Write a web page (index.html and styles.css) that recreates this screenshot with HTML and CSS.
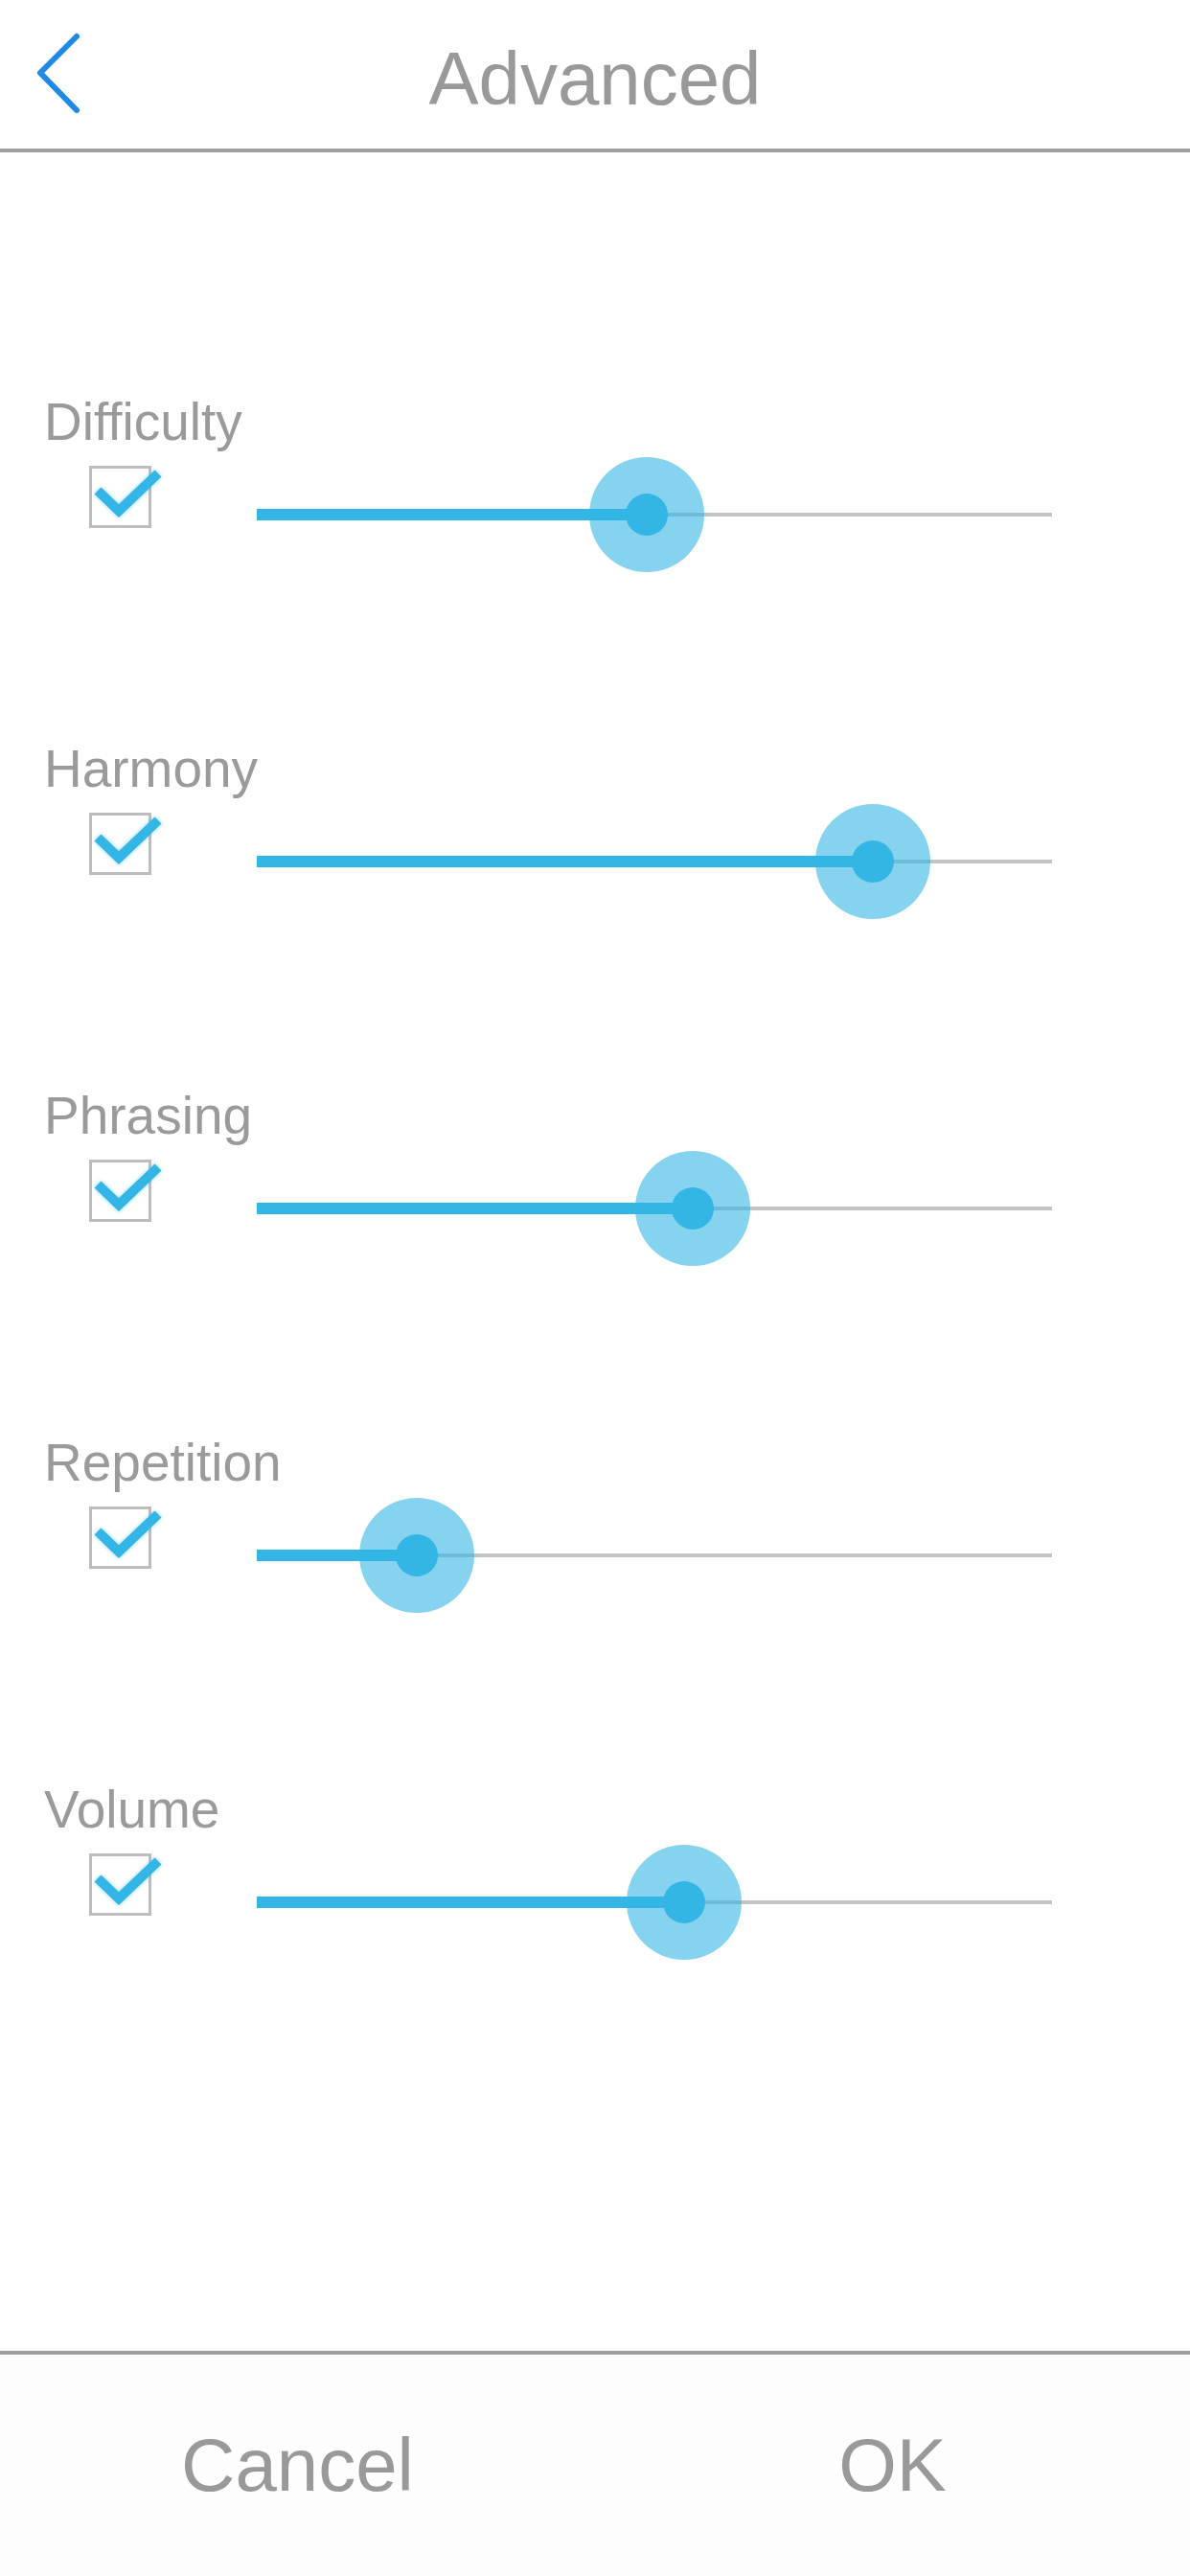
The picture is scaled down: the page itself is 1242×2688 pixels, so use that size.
FILE: index.html
```html
<!DOCTYPE html>
<html lang="en">
  <head>
    <meta charset="UTF-8" />
    <title>Advanced</title>
    <link rel="stylesheet" href="styles.css">
  </head>
  <body>
    <div class="screen">
      <div class="back-press"></div>

      <div class="header">
        <a class="back-btn" href="#">
          <svg width="60" height="100" viewBox="0 0 60 100">
            <polyline points="39,3 1,41 39,80" fill="none" stroke="#1e8ae6" stroke-width="6" stroke-linecap="round" stroke-linejoin="round" />
          </svg>
        </a>
        <div class="title">Advanced</div>
      </div>

      <div class="content">
        <div class="setting">
          <div class="setting-label">Difficulty</div>
          <div class="setting-controls">
            <div class="check">
              <svg width="65" height="65" viewBox="0 0 65 65">
                <polyline points="9,26 31,47 72,8" fill="none" stroke="#33b5e5" stroke-width="10" />
              </svg>
            </div>
            <div class="slider">
              <div class="slider-track"></div>
              <div class="slider-fill" style="width: 49%"></div>
              <div class="slider-thumb" style="left: 49%"></div>
            </div>
          </div>
        </div>

        <div class="setting">
          <div class="setting-label">Harmony</div>
          <div class="setting-controls">
            <div class="check">
              <svg width="65" height="65" viewBox="0 0 65 65">
                <polyline points="9,26 31,47 72,8" fill="none" stroke="#33b5e5" stroke-width="10" />
              </svg>
            </div>
            <div class="slider">
              <div class="slider-track"></div>
              <div class="slider-fill" style="width: 77.5%"></div>
              <div class="slider-thumb" style="left: 77.5%"></div>
            </div>
          </div>
        </div>

        <div class="setting">
          <div class="setting-label">Phrasing</div>
          <div class="setting-controls">
            <div class="check">
              <svg width="65" height="65" viewBox="0 0 65 65">
                <polyline points="9,26 31,47 72,8" fill="none" stroke="#33b5e5" stroke-width="10" />
              </svg>
            </div>
            <div class="slider">
              <div class="slider-track"></div>
              <div class="slider-fill" style="width: 54.8%"></div>
              <div class="slider-thumb" style="left: 54.8%"></div>
            </div>
          </div>
        </div>

        <div class="setting">
          <div class="setting-label">Repetition</div>
          <div class="setting-controls">
            <div class="check">
              <svg width="65" height="65" viewBox="0 0 65 65">
                <polyline points="9,26 31,47 72,8" fill="none" stroke="#33b5e5" stroke-width="10" />
              </svg>
            </div>
            <div class="slider">
              <div class="slider-track"></div>
              <div class="slider-fill" style="width: 20.1%"></div>
              <div class="slider-thumb" style="left: 20.1%"></div>
            </div>
          </div>
        </div>

        <div class="setting">
          <div class="setting-label">Volume</div>
          <div class="setting-controls">
            <div class="check">
              <svg width="65" height="65" viewBox="0 0 65 65">
                <polyline points="9,26 31,47 72,8" fill="none" stroke="#33b5e5" stroke-width="10" />
              </svg>
            </div>
            <div class="slider">
              <div class="slider-track"></div>
              <div class="slider-fill" style="width: 53.7%"></div>
              <div class="slider-thumb" style="left: 53.7%"></div>
            </div>
          </div>
        </div>
      </div>

      <div class="footer">
        <button class="footer-btn">Cancel</button>
        <button class="footer-btn">OK</button>
      </div>
    </div>
  </body>
</html>
```

FILE: styles.css
```css
html,
body {
  margin: 0;
  padding: 0;
  background: #ffffff;
}
body {
  font-family: "Liberation Sans", Arial, sans-serif;
  color: #999999;
}
.screen {
  width: 1242px;
  height: 2688px;
  display: flex;
  flex-direction: column;
  position: relative;
}
.back-press {
  position: absolute;
  top: 0;
  left: 0;
  width: 182px;
  height: 193px;
  background: #fafafa;
  z-index: -1;
}
.header {
  height: 155px;
  border-bottom: 4px solid #9e9e9e;
  display: flex;
  align-items: center;
  justify-content: center;
  position: relative;
  box-sizing: content-box;
}
.back-btn {
  position: absolute;
  left: 41px;
  top: 35px;
  display: block;
  width: 60px;
  height: 100px;
}
.back-btn svg {
  display: block;
  overflow: visible;
}
.title {
  font-size: 78px;
  line-height: 1;
  padding-top: 8px;
  color: #999999;
}
.content {
  flex: 1;
  padding: 251px 0 0 46px;
  display: flex;
  flex-direction: column;
  gap: 175px;
}
.setting-label {
  font-size: 55px;
  line-height: 60px;
  height: 60px;
  color: #9a9a9a;
}
.setting-controls {
  margin-top: 7px;
  height: 120px;
  display: flex;
  align-items: flex-start;
}
.check {
  width: 59px;
  height: 59px;
  border: 3px solid #bdbdbd;
  margin: 9px 0 0 47px;
  position: relative;
}
.check svg {
  position: absolute;
  top: -3px;
  left: -3px;
  overflow: visible;
  filter: drop-shadow(0 0 2px rgba(51, 181, 229, 0.6));
}
.slider {
  margin-left: 110px;
  width: 830px;
  height: 120px;
  position: relative;
}
.slider-track {
  position: absolute;
  left: 0;
  right: 0;
  top: 58px;
  height: 4px;
  background: #c4c4c4;
}
.slider-fill {
  position: absolute;
  left: 0;
  top: 54px;
  height: 12px;
  background: #33b5e5;
}
.slider-thumb {
  position: absolute;
  top: 0;
  width: 120px;
  height: 120px;
  margin-left: -60px;
  border-radius: 50%;
  background: rgba(51, 181, 229, 0.6);
}
.slider-thumb::after {
  content: "";
  position: absolute;
  left: 38px;
  top: 38px;
  width: 44px;
  height: 44px;
  border-radius: 50%;
  background: #33b5e5;
}
.footer {
  height: 231px;
  border-top: 4px solid #9e9e9e;
  background: #fdfdfd;
  display: flex;
}
.footer-btn {
  flex: 1;
  border: none;
  background: transparent;
  font-family: "Liberation Sans", Arial, sans-serif;
  font-size: 78px;
  color: #999999;
  padding: 0;
  cursor: pointer;
}
```
